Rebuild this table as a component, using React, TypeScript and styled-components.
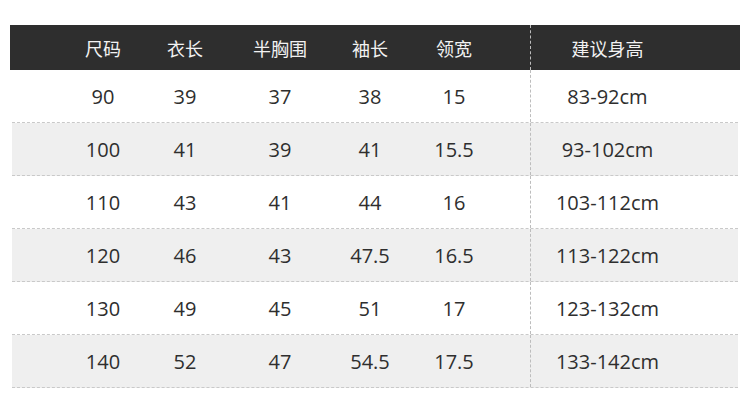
import React from "react";
import styled, { createGlobalStyle } from "styled-components";

const Global = createGlobalStyle`
  html, body { margin: 0; padding: 0; background: #ffffff; }
  body { font-family: "Open Sans", "Noto Sans CJK SC", sans-serif; }
`;

const Page = styled.div`
  width: 750px;
  height: 402px;
  box-sizing: border-box;
  padding: 25px 10px 0;
  background: #ffffff;
`;

const COLS = "86px 78px 112px 68px 126px 1fr";

const HeaderRow = styled.div`
  display: grid;
  grid-template-columns: ${COLS};
  height: 45px;
  padding-left: 50px;
  background: #2e2e2e;
  color: #f2f2f2;
  font-family: "Noto Sans CJK SC", sans-serif;
  font-size: 18px;
`;

const Body = styled.div`
  margin: 0 2px;
`;

const Row = styled.div<{ $shade: boolean }>`
  display: grid;
  grid-template-columns: ${COLS};
  height: 53px;
  box-sizing: border-box;
  padding-left: 48px;
  background: ${(p) => (p.$shade ? "#efefef" : "#ffffff")};
  border-bottom: 1px dashed #c9c9c9;
  color: #2e2e2e;
  font-size: 20px;
`;

const Cell = styled.div<{ $padRight?: number; $divider?: boolean }>`
  display: flex;
  align-items: center;
  justify-content: center;
  padding-right: ${(p) => p.$padRight ?? 0}px;
  border-left: ${(p) => (p.$divider ? "1px dashed #bdbdbd" : "none")};
  white-space: nowrap;
`;

const headers = ["尺码", "衣长", "半胸围", "袖长", "领宽", "建议身高"];
const rows = [
  ["90", "39", "37", "38", "15", "83-92cm"],
  ["100", "41", "39", "41", "15.5", "93-102cm"],
  ["110", "43", "41", "44", "16", "103-112cm"],
  ["120", "46", "43", "47.5", "16.5", "113-122cm"],
  ["130", "49", "45", "51", "17", "123-132cm"],
  ["140", "52", "47", "54.5", "17.5", "133-142cm"],
];

const pad = (i: number, last: number) => (i === 4 ? 26 : i === 5 ? last : 0);

export default function App() {
  return (
    <Page>
      <Global />
      <HeaderRow>
        {headers.map((h, i) => (
          <Cell key={h} $padRight={pad(i, 56)} $divider={i === 5}>
            {h}
          </Cell>
        ))}
      </HeaderRow>
      <Body>
        {rows.map((r, ri) => (
          <Row key={ri} $shade={ri % 2 === 1}>
            {r.map((v, i) => (
              <Cell key={i} $padRight={pad(i, 54)} $divider={i === 5}>
                {v}
              </Cell>
            ))}
          </Row>
        ))}
      </Body>
    </Page>
  );
}
